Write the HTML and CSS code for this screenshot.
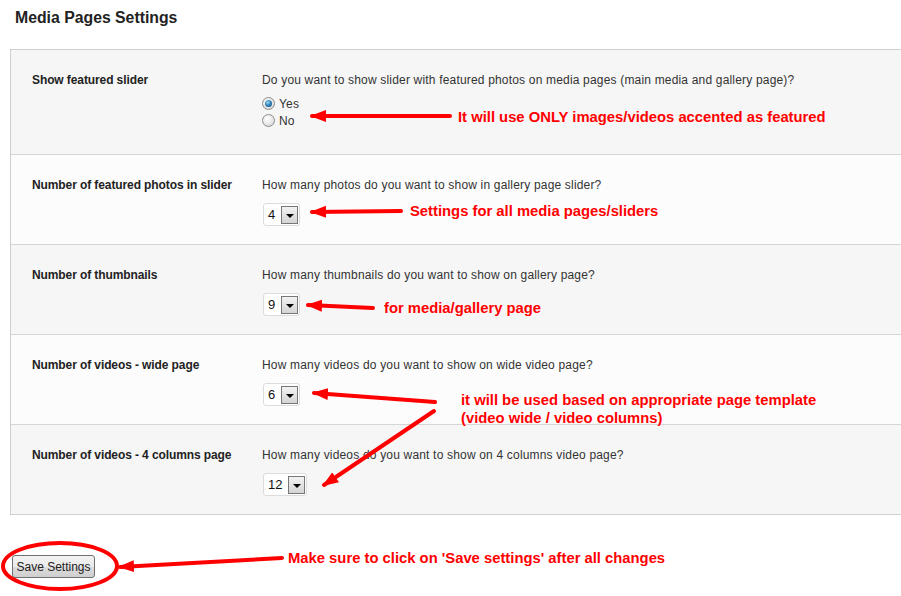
FILE: index.html
```html
<!DOCTYPE html>
<html>
<head>
<meta charset="utf-8">
<link rel="stylesheet" href="styles.css">
</head>
<body>
<div class="page">
  <h1 class="title">Media Pages Settings</h1>
  <div class="settings">
    <div class="row row-first odd">
      <div class="label">Show featured slider</div>
      <div class="field">
        <div class="desc">Do you want to show slider with featured photos on media pages (main media and gallery page)?</div>
        <label class="radio-line"><span class="radio checked"></span>Yes</label>
        <label class="radio-line"><span class="radio"></span>No</label>
      </div>
    </div>
    <div class="row even">
      <div class="label">Number of featured photos in slider</div>
      <div class="field">
        <div class="desc">How many photos do you want to show in gallery page slider?</div>
        <div class="select"><span class="select-val">4</span><span class="select-btn"></span></div>
      </div>
    </div>
    <div class="row odd">
      <div class="label">Number of thumbnails</div>
      <div class="field">
        <div class="desc">How many thumbnails do you want to show on gallery page?</div>
        <div class="select"><span class="select-val">9</span><span class="select-btn"></span></div>
      </div>
    </div>
    <div class="row even">
      <div class="label">Number of videos - wide page</div>
      <div class="field">
        <div class="desc">How many videos do you want to show on wide video page?</div>
        <div class="select"><span class="select-val">6</span><span class="select-btn"></span></div>
      </div>
    </div>
    <div class="row odd">
      <div class="label">Number of videos - 4 columns page</div>
      <div class="field">
        <div class="desc">How many videos do you want to show on 4 columns video page?</div>
        <div class="select"><span class="select-val">12</span><span class="select-btn"></span></div>
      </div>
    </div>
  </div>
  <div class="actions">
    <button class="save-btn">Save Settings</button>
  </div>
</div>

<svg class="overlay" width="901" height="596" viewBox="0 0 901 596">
  <defs>
    <marker id="head" markerUnits="userSpaceOnUse" markerWidth="18" markerHeight="14" refX="14" refY="7" orient="auto">
      <path d="M0,1 L16,7 L0,13 z" fill="#f00"/>
    </marker>
  </defs>
  <g stroke="#f00" stroke-width="4" stroke-linecap="round" fill="none">
    <line x1="450" y1="116" x2="312" y2="116" marker-end="url(#head)"/>
    <line x1="401" y1="211" x2="312" y2="212" marker-end="url(#head)"/>
    <line x1="373" y1="308" x2="308" y2="305" marker-end="url(#head)"/>
    <line x1="435" y1="402" x2="314" y2="393" marker-end="url(#head)"/>
    <line x1="434" y1="411" x2="324" y2="485" marker-end="url(#head)"/>
    <line x1="282" y1="558" x2="120" y2="567" marker-end="url(#head)"/>
    <ellipse cx="60" cy="566" rx="57" ry="23"/>
  </g>
</svg>

<div class="note note-1">It will use ONLY images/videos accented as featured</div>
<div class="note note-2">Settings for all media pages/sliders</div>
<div class="note note-3">for media/gallery page</div>
<div class="note note-4">it will be used based on appropriate page template<br>(video wide / video columns)</div>
<div class="note note-5">Make sure to click on 'Save settings' after all changes</div>
</body>
</html>
```

FILE: styles.css
```css
html, body {
  margin: 0;
  padding: 0;
  background: #fff;
  overflow: hidden;
}
body {
  width: 901px;
  height: 596px;
  position: relative;
  font-family: "Liberation Sans", Arial, sans-serif;
  color: #333;
}
.page {
  display: flex;
  flex-direction: column;
}
.title {
  margin: 0;
  padding: 9px 0 0 15px;
  font-size: 15.8px;
  line-height: 18px;
  font-weight: bold;
  color: #222;
}
.settings {
  margin: 22px 0 0 10px;
  width: 900px;
  border: 1px solid #cfcfcf;
  display: flex;
  flex-direction: column;
}
.row {
  display: flex;
  height: 89px;
  border-top: 1px solid #d6d6d6;
  box-sizing: content-box;
}
.row-first {
  border-top: none;
  height: 104px;
}
.odd { background: #f6f6f6; }
.even { background: #fcfcfc; }
.label {
  width: 230px;
  padding: 23px 0 0 21px;
  font-size: 12px;
  line-height: 14px;
  font-weight: bold;
  letter-spacing: -0.1px;
  color: #222;
  flex: none;
}
.field {
  padding-top: 23px;
  font-size: 12px;
  line-height: 14px;
  letter-spacing: 0.18px;
  color: #333;
  display: flex;
  flex-direction: column;
  align-items: flex-start;
}
.radio-line {
  display: flex;
  align-items: center;
  height: 17px;
  font-size: 12px;
}
.radio-line:first-of-type { margin-top: 8px; }
.radio {
  width: 11px;
  height: 11px;
  border: 1px solid #8d8d8d;
  border-radius: 50%;
  background: radial-gradient(circle at 40% 35%, #ffffff 0%, #e6e6e6 55%, #c9c9c9 100%);
  margin: 0 4px 0 0;
  position: relative;
  flex: none;
}
.radio.checked::after {
  content: "";
  position: absolute;
  left: 2px;
  top: 2px;
  width: 7px;
  height: 7px;
  border-radius: 50%;
  background: radial-gradient(circle at 40% 35%, #9fd6f5 0%, #2c7fb8 50%, #0f3f6a 100%);
}
.select {
  margin-top: 11px;
  margin-left: 1px;
  height: 21px;
  border: 1px solid #dcdcdc;
  border-radius: 3px;
  background: #fff;
  display: flex;
  align-items: center;
  padding: 0 1px 0 4px;
  gap: 6px;
}
.select-val {
  font-size: 13px;
  color: #111;
  line-height: 16px;
  letter-spacing: 0;
}
.select-btn {
  width: 15px;
  height: 16px;
  border: 1px solid #777;
  background: linear-gradient(#f2f2f2, #d4d4d4);
  position: relative;
}
.select-btn::after {
  content: "";
  position: absolute;
  left: 4px;
  top: 7px;
  border-left: 4px solid transparent;
  border-right: 4px solid transparent;
  border-top: 4px solid #000;
}
.actions {
  padding: 40px 0 0 12px;
}
.save-btn {
  width: 83px;
  height: 23px;
  font-family: "Liberation Sans", Arial, sans-serif;
  font-size: 12px;
  color: #222;
  border: 1px solid #707070;
  border-radius: 3px;
  background: linear-gradient(#f2f2f2 0%, #ebebeb 50%, #dddddd 51%, #cfcfcf 100%);
  padding: 0;
  margin: 0;
}
.overlay {
  position: absolute;
  left: 0;
  top: 0;
  pointer-events: none;
}
.note {
  position: absolute;
  font-size: 14.8px;
  line-height: 17px;
  font-weight: bold;
  color: #f00;
  white-space: nowrap;
}
.note-1 { left: 458px; top: 109px; }
.note-2 { left: 410px; top: 203px; }
.note-3 { left: 384px; top: 300px; }
.note-4 { left: 461px; top: 391px; line-height: 18px; }
.note-5 { left: 288px; top: 550px; }
```
